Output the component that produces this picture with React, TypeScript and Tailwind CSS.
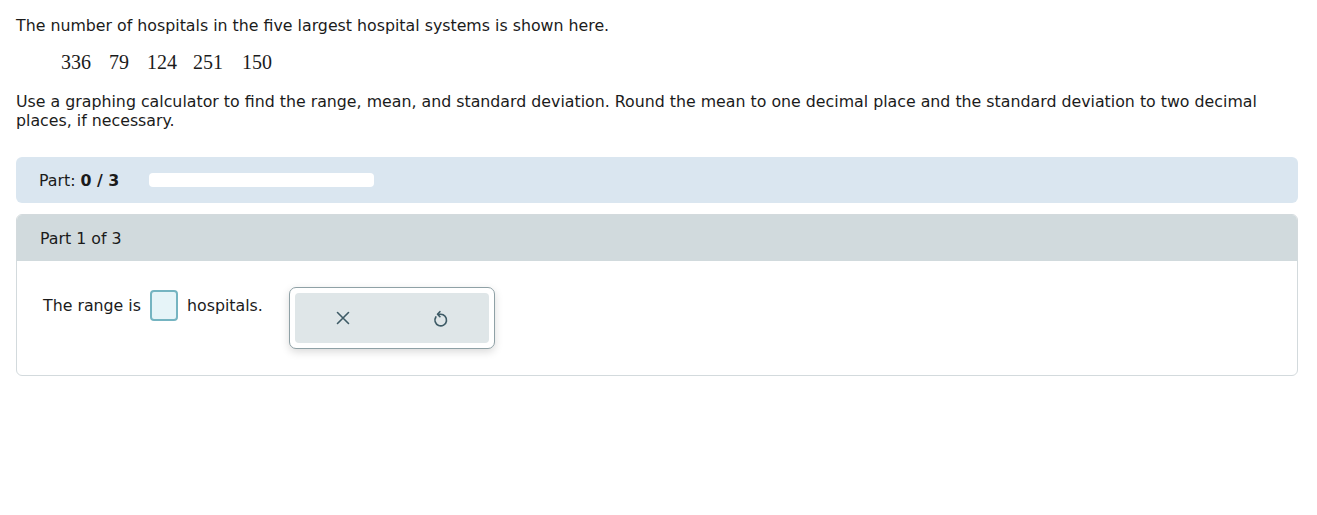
import React from "react";

export default function App() {
  return (
    <div className="w-[1317px] min-h-[515px] bg-white text-[#1b1b1b] text-[15.8px] leading-[19px] font-['DejaVu_Sans',sans-serif]">
      <div className="w-[1282px] ml-4 pt-[16px]">
        <p>The number of hospitals in the five largest hospital systems is shown here.</p>
        <div className="flex pl-[45px] mt-[15px] text-[20px] leading-[24px] font-['Liberation_Serif',serif]">
          <span>336</span>
          <span className="ml-[18px]">79</span>
          <span className="ml-[18px]">124</span>
          <span className="ml-[16px]">251</span>
          <span className="ml-[19px]">150</span>
        </div>
        <p className="mt-[18px] pr-[20px]">
          Use a graphing calculator to find the range, mean, and standard deviation. Round the mean to one decimal place and the standard deviation to two decimal places, if necessary.
        </p>
        <div className="mt-[27px] h-[46px] rounded-[6px] bg-[#dae6f0] flex items-center pl-[23px]">
          <span>
            Part: <b className="font-bold">0 / 3</b>
          </span>
          <div className="ml-[30px] w-[225px] h-[14px] rounded-[4px] bg-white" />
        </div>
        <div className="mt-[11px] border border-[#d3dadd] rounded-[6px] overflow-hidden">
          <div className="h-[46px] bg-[#d1dadd] flex items-center pl-[23px]">Part 1 of 3</div>
          <div className="pt-[26px] pb-[26px] pl-[26px] flex items-start">
            <div className="flex items-center mt-[3px]">
              <span>The range is</span>
              <div className="ml-[9px] w-[28px] h-[31px] rounded-[4px] border-2 border-[#75b4c1] bg-[#e6f4f8]" />
              <span className="ml-[9px]">hospitals.</span>
            </div>
            <div className="ml-[26px] w-[206px] h-[62px] rounded-[7px] border border-[#8fa1a6] bg-white p-[5px] shadow-[0_3px_8px_rgba(0,0,0,0.15)]">
              <div className="h-full rounded-[4px] bg-[#dfe6e8] flex">
                <div className="flex-1 flex items-center justify-center">
                  <svg width="16" height="16" viewBox="0 0 16 16" fill="none" stroke="#3e5b66" strokeWidth="1.6" strokeLinecap="round">
                    <path d="M2.5 2.5 L13.5 13.5 M13.5 2.5 L2.5 13.5" />
                  </svg>
                </div>
                <div className="flex-1 flex items-center justify-center">
                  <svg width="19" height="19" viewBox="0 0 18 18" fill="none" stroke="#3e5b66" strokeWidth="1.6" strokeLinecap="round" strokeLinejoin="round">
                    <path d="M4.6 7.5 A5.5 5.5 0 1 0 9 5 L6.8 5" />
                    <path d="M8.4 2.6 L6.2 5 L8.4 7.2" />
                  </svg>
                </div>
              </div>
            </div>
          </div>
        </div>
      </div>
    </div>
  );
}
